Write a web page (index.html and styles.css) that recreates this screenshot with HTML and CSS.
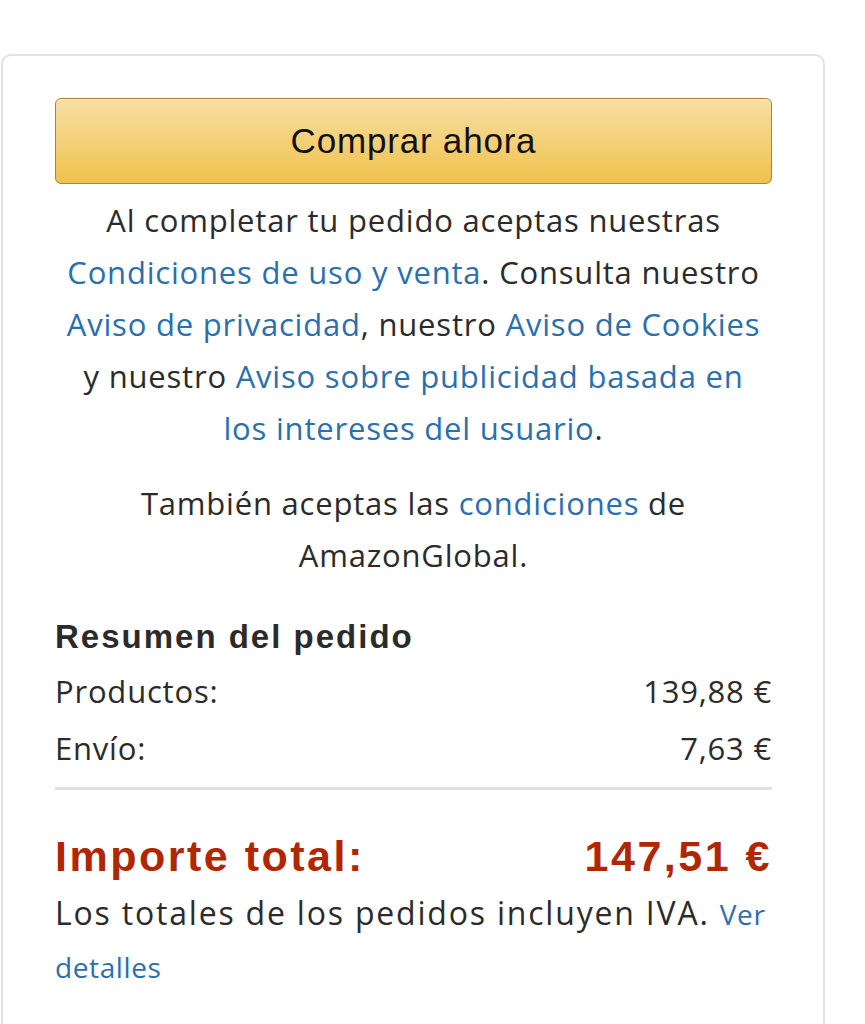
FILE: index.html
```html
<!DOCTYPE html>
<html lang="es">
<head>
<meta charset="utf-8">
<title>Comprar ahora</title>
<link rel="stylesheet" href="styles.css">
</head>
<body>
<div class="card">
  <button class="buy">Comprar ahora</button>
  <p class="legal">Al completar tu pedido aceptas nuestras<br><a href="#">Condiciones de uso y venta</a>. Consulta nuestro<br><a href="#">Aviso de privacidad</a>, nuestro <a href="#">Aviso de Cookies</a><br>y nuestro <a href="#">Aviso sobre publicidad basada en<br>los intereses del usuario</a>.</p>
  <p class="legal second">También aceptas las <a href="#">condiciones</a> de<br>AmazonGlobal.</p>
  <h3 class="summary-title">Resumen del pedido</h3>
  <div class="row"><span>Productos:</span><span>139,88 €</span></div>
  <div class="row"><span>Envío:</span><span>7,63 €</span></div>
  <hr class="divider">
  <div class="total"><span>Importe total:</span><span>147,51 €</span></div>
  <p class="vat">Los totales de los pedidos incluyen IVA. <a href="#" class="small">Ver<br>detalles</a></p>
</div>
</body>
</html>
```

FILE: styles.css
```css
html, body { margin: 0; padding: 0; background: #fff; }
body { font-family: "Open Sans", "Noto Sans", sans-serif; color: #111; }
.card {
  margin: 54px 0 0 1px;
  width: 717px;
  height: 926px;
  padding: 42px 51px 0 52px;
  border: 2px solid #e2e2e2;
  border-bottom: none;
  border-radius: 10px 10px 0 0;
}
.buy {
  display: block;
  width: 100%;
  height: 86px;
  border: 1px solid #a88734;
  border-radius: 6px;
  background: linear-gradient(to bottom, #f7dfa5, #f0c14b);
  font-family: "Liberation Sans", Arial, sans-serif;
  font-size: 35px;
  letter-spacing: 0.8px;
  color: #111;
  box-shadow: inset 0 1px 0 rgba(255,255,255,0.4);
}
a { color: #2a6fb0; text-decoration: none; }
.legal {
  margin: 10px 0 0;
  text-align: center;
  font-size: 31px;
  letter-spacing: 0.8px;
  line-height: 52px;
  color: #2b2b2b;
  white-space: nowrap;
}
.legal.second { margin-top: 23px; }
.summary-title {
  margin: 30px 0 0;
  font-family: "Liberation Sans", Arial, sans-serif;
  font-weight: bold;
  font-size: 33px;
  letter-spacing: 2px;
  line-height: 52px;
  color: #2b2b2b;
}
.row {
  display: flex;
  justify-content: space-between;
  font-size: 31px;
  letter-spacing: 0.8px;
  line-height: 57px;
  color: #2b2b2b;
}
.divider {
  margin: 10px 0 0;
  border: none;
  height: 3px;
  background: #e0e0e0;
}
.total {
  display: flex;
  justify-content: space-between;
  margin-top: 41px;
  font-family: "Liberation Sans", Arial, sans-serif;
  font-weight: bold;
  font-size: 43px;
  letter-spacing: 2.5px;
  line-height: 50px;
  color: #b12704;
}
.vat {
  margin: 6px 0 0;
  font-size: 32px;
  letter-spacing: 1.8px;
  line-height: 52px;
  color: #2b2b2b;
  white-space: nowrap;
}
.vat .small { font-size: 28px; letter-spacing: 0.6px; }
```
